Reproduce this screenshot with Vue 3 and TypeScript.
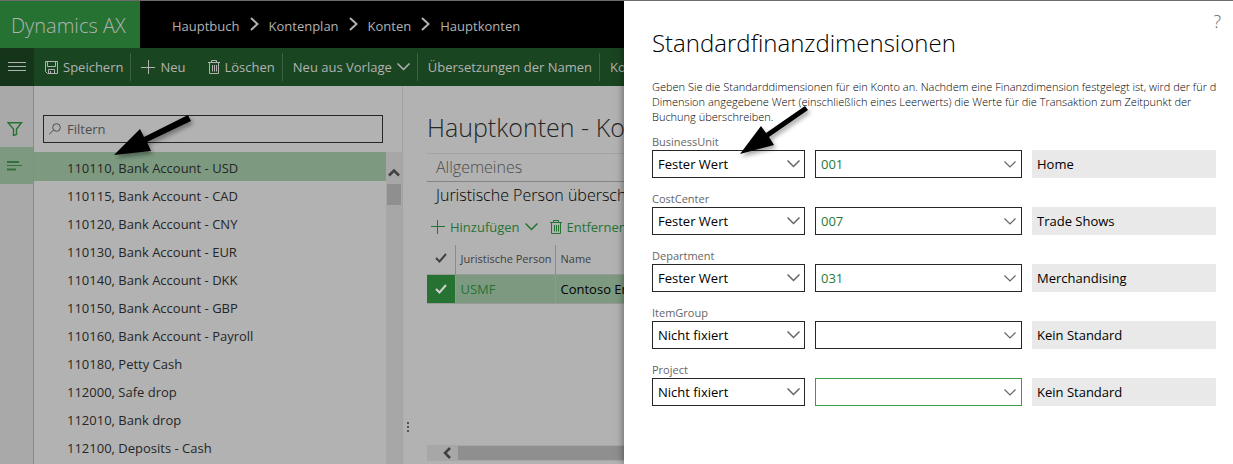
<script setup lang="ts">
import { ref } from 'vue'

interface Dimension {
  name: string
  mode: string
  value: string
  description: string
  active?: boolean
}

const crumbs = ['Hauptbuch', 'Kontenplan', 'Konten', 'Hauptkonten']

const accounts = [
  '110110, Bank Account - USD',
  '110115, Bank Account - CAD',
  '110120, Bank Account - CNY',
  '110130, Bank Account - EUR',
  '110140, Bank Account - DKK',
  '110150, Bank Account - GBP',
  '110160, Bank Account - Payroll',
  '110180, Petty Cash',
  '112000, Safe drop',
  '112010, Bank drop',
  '112100, Deposits - Cash',
]
const selected = ref(0)
const filter = ref('')

const dimensions = ref<Dimension[]>([
  { name: 'BusinessUnit', mode: 'Fester Wert', value: '001', description: 'Home' },
  { name: 'CostCenter', mode: 'Fester Wert', value: '007', description: 'Trade Shows' },
  { name: 'Department', mode: 'Fester Wert', value: '031', description: 'Merchandising' },
  { name: 'ItemGroup', mode: 'Nicht fixiert', value: '', description: 'Kein Standard' },
  { name: 'Project', mode: 'Nicht fixiert', value: '', description: 'Kein Standard', active: true },
])
</script>

<template>
  <div class="app">
    <header class="topbar">
      <div class="brand">Dynamics AX</div>
      <nav class="crumbs">
        <template v-for="(crumb, i) in crumbs" :key="crumb">
          <svg v-if="i > 0" class="crumb-sep" width="9" height="14" viewBox="0 0 9 14">
            <path d="M1 1l6.500 6L1 13" fill="none" stroke="currentColor" stroke-width="2" />
          </svg>
          <a href="#">{{ crumb }}</a>
        </template>
      </nav>
    </header>

    <div class="toolbar">
      <button class="menu" aria-label="Menü">
        <svg width="18" height="12" viewBox="0 0 18 12">
          <path d="M0 2.500h18M0 6.500h18M0 10.500h18" stroke="currentColor" />
        </svg>
      </button>
      <div class="group">
        <button>
          <svg width="13" height="13" viewBox="0 0 13 13" fill="none" stroke="currentColor">
            <path d="M.5.5h12v12H2.500l-2-2zM2.500.5v5h8v-5M3.500 12.500v-4h6v4M5.500 10v2.500" />
          </svg>
          Speichern
        </button>
      </div>
      <div class="group">
        <button>
          <svg width="14" height="14" viewBox="0 0 14 14" stroke="currentColor">
            <path d="M7.500 0v14M0 7.500h14" />
          </svg>
          Neu
        </button>
        <button>
          <svg width="12" height="14" viewBox="0 0 12 14" fill="none" stroke="currentColor">
            <path d="M0 2.500h12M3.500 2V.5h5V2M1.500 3v10.500h9V3M4.500 5v6.500M6.500 5v6.500M8.500 5v6.500" />
          </svg>
          Löschen
        </button>
      </div>
      <div class="group">
        <button>
          Neu aus Vorlage
          <svg width="13" height="8" viewBox="0 0 13 8">
            <path d="M.5.5l6 6 6-6" fill="none" stroke="currentColor" stroke-width="1.500" />
          </svg>
        </button>
      </div>
      <div class="group"><button>Übersetzungen der Namen</button></div>
      <div class="group"><button>Konten</button></div>
    </div>

    <div class="body">
      <aside class="rail">
        <button class="rail-filter" aria-label="Filter">
          <svg width="16" height="14" viewBox="0 0 16 14">
            <path d="M1 .7h13.500L9.500 7v5.500l-3 1V7z" fill="none" stroke="currentColor" stroke-width="1.400" />
          </svg>
        </button>
        <button class="rail-list" aria-label="Liste">
          <svg width="16" height="10" viewBox="0 0 16 10">
            <path d="M0 1h12M0 8.500h9" stroke="currentColor" stroke-width="2" />
            <path d="M0 4.500h15" stroke="currentColor" />
          </svg>
        </button>
      </aside>

      <section class="accounts">
        <label class="filter">
          <svg width="12" height="12" viewBox="0 0 12 12">
            <path d="M0 11.500l4.200-4.200" stroke="currentColor" fill="none" />
            <circle cx="7.500" cy="4.500" r="3.800" stroke="currentColor" fill="none" />
          </svg>
          <input v-model="filter" type="text" placeholder="Filtern" aria-label="Filtern" />
        </label>
        <div class="list-area">
          <ul class="list">
            <li v-for="(account, i) in accounts" :key="account">
              <button :class="{ on: i === selected }" @click="selected = i">{{ account }}</button>
            </li>
          </ul>
          <div class="vscroll">
            <svg width="12" height="9" viewBox="0 0 12 9">
              <path d="M1 7.500l5-5 5 5" fill="none" stroke="currentColor" stroke-width="2.500" />
            </svg>
            <div class="vthumb"></div>
          </div>
        </div>
      </section>

      <div class="splitter"><i></i><i></i><i></i></div>

      <main class="detail">
        <h1>Hauptkonten - Kontenplan</h1>
        <h2>Allgemeines</h2>
        <h3>Juristische Person überschreiben</h3>
        <div class="actions">
          <button>
            <svg width="14" height="14" viewBox="0 0 14 14" stroke="currentColor">
              <path d="M6.500 0v14M0 6.500h14" />
            </svg>
            Hinzufügen
            <svg width="13" height="8" viewBox="0 0 13 8">
              <path d="M.5.5l6 6 6-6" fill="none" stroke="currentColor" stroke-width="1.500" />
            </svg>
          </button>
          <button>
            <svg width="12" height="14" viewBox="0 0 12 14" fill="none" stroke="currentColor">
              <path d="M0 2.500h12M3.500 2V.5h5V2M1.500 3v10.500h9V3M4.500 5v6.500M6.500 5v6.500M8.500 5v6.500" />
            </svg>
            Entfernen
          </button>
        </div>
        <table class="grid">
          <thead>
            <tr>
              <th class="mark">
                <svg width="12" height="10" viewBox="0 0 12 10">
                  <path d="M1 5l3.500 3.500L11 1" fill="none" stroke="currentColor" stroke-width="2" />
                </svg>
              </th>
              <th class="entity">Juristische Person</th>
              <th>Name</th>
            </tr>
          </thead>
          <tbody>
            <tr>
              <td class="mark">
                <svg width="12" height="10" viewBox="0 0 12 10">
                  <path d="M1 5l3.500 3.500L11 1" fill="none" stroke="currentColor" stroke-width="2" />
                </svg>
              </td>
              <td class="entity"><a href="#">USMF</a></td>
              <td>Contoso Entertainment</td>
            </tr>
          </tbody>
        </table>
        <div class="hscroll">
          <svg width="9" height="12" viewBox="0 0 9 12">
            <path d="M8 1L3 6l5 5" fill="none" stroke="currentColor" stroke-width="2.500" />
          </svg>
          <div class="hthumb"></div>
        </div>
      </main>
    </div>

    <section class="dialog" role="dialog" aria-labelledby="dialog-title">
      <button class="help" aria-label="Hilfe">?</button>
      <h2 id="dialog-title">Standardfinanzdimensionen</h2>
      <p class="intro">
        Geben Sie die Standarddimensionen für ein Konto an. Nachdem eine Finanzdimension festgelegt ist, wird der für die<br />
        Dimension angegebene Wert (einschließlich eines Leerwerts) die Werte für die Transaktion zum Zeitpunkt der<br />
        Buchung überschreiben.
      </p>
      <div v-for="dim in dimensions" :key="dim.name" class="dimension">
        <label :for="`mode-${dim.name}`">{{ dim.name }}</label>
        <div class="fields">
          <div class="select">
            <select :id="`mode-${dim.name}`" v-model="dim.mode">
              <option>Fester Wert</option>
              <option>Nicht fixiert</option>
            </select>
            <svg width="13" height="8" viewBox="0 0 13 8">
              <path d="M.5.5l6 6 6-6" fill="none" stroke="currentColor" stroke-width="1.500" />
            </svg>
          </div>
          <div class="lookup" :class="{ active: dim.active }">
            <input v-model="dim.value" type="text" :aria-label="`${dim.name} Wert`" />
            <button :aria-label="`${dim.name} suchen`">
              <svg width="12" height="7" viewBox="0 0 12 7">
                <path d="M.5.5L6 6 11.500.5" fill="none" stroke="currentColor" stroke-width="1.200" />
              </svg>
            </button>
          </div>
          <output class="description">{{ dim.description }}</output>
        </div>
      </div>
    </section>

    <svg class="pointer pointer-account" width="80" height="46" viewBox="0 0 80 46">
      <path d="M2 42L28 16l4 8L76 2l3 6-44 21 4 9z" />
    </svg>
    <svg class="pointer pointer-mode" width="72" height="52" viewBox="0 0 72 52">
      <path d="M1 50l21-28 5 7L66 2l3 4-39 27 5 8z" />
    </svg>
  </div>
</template>

<style>
body {
  margin: 0;
}
</style>

<style scoped>
* {
  box-sizing: border-box;
}

.app {
  position: relative;
  display: flex;
  flex-direction: column;
  height: 100vh;
  overflow: hidden;
  border-top: 1px solid #6d6b6d;
  background: #b2b2b2;
  color: #262626;
  font: 13px/20px "Segoe UI", "Open Sans", "Noto Sans", sans-serif;
  white-space: nowrap;
}

button,
input,
select {
  margin: 0;
  padding: 0;
  border: 0;
  border-radius: 0;
  outline: 0;
  background: none;
  color: inherit;
  font: inherit;
}

a {
  color: inherit;
  text-decoration: none;
}

svg {
  flex: none;
}

.topbar {
  display: flex;
  flex: none;
  height: 47px;
  background: #000;
  color: #b2b2b2;
}

.brand {
  width: 140px;
  padding-left: 11px;
  background: #267233;
  font-size: 20px;
  line-height: 50px;
  font-weight: 300;
}

.crumbs {
  display: flex;
  align-items: center;
  gap: 10px;
  padding: 2px 0 0 32px;
}

.crumb-sep {
  margin-bottom: 4px;
}

.toolbar {
  display: flex;
  flex: none;
  height: 38px;
  background: #1a4521;
  color: #b2b2b2;
}

.menu {
  width: 34px;
  background: #143519;
}

.group {
  display: flex;
  align-items: center;
  gap: 22px;
  padding: 0 7px 0 11px;
  position: relative;
}

.group + .group::before {
  content: "";
  position: absolute;
  left: 0;
  top: 5px;
  bottom: 5px;
  width: 1px;
  background: #3d6243;
}

.group button,
.actions button {
  display: flex;
  align-items: center;
  gap: 5px;
}

.body {
  display: flex;
  flex: 1;
  min-height: 0;
}

.rail {
  display: flex;
  flex-direction: column;
  flex: none;
  width: 34px;
  padding-top: 24px;
  border-right: 1px solid #8a8a8a;
  background: #a9a9a9;
}

.rail button {
  display: flex;
  align-items: center;
  height: 37px;
  padding-left: 7px;
}

.rail-filter {
  color: #267233;
}

.rail .rail-list {
  background: #7d9a80;
  color: #356e3f;
}

.accounts {
  display: flex;
  flex-direction: column;
  flex: none;
  width: 369px;
  padding-top: 29px;
  border-right: 1px solid #a3a3a3;
}

.filter {
  display: flex;
  align-items: center;
  flex: none;
  gap: 6px;
  height: 28px;
  margin: 0 19px 9px 9px;
  padding-left: 5px;
  border: 1px solid #262626;
  color: #4d4d4d;
}

.filter input {
  flex: 1;
}

.filter input::placeholder {
  color: #4d4d4d;
  opacity: 1;
}

.list-area {
  display: flex;
  flex: 1;
  min-height: 0;
}

.list {
  flex: 1;
  margin: 0;
  padding: 0;
  overflow: hidden;
  list-style: none;
}

.list button {
  display: block;
  width: 100%;
  height: 28px;
  padding-left: 33px;
  text-align: left;
}

.list .on {
  height: 29px;
  margin-bottom: 1px;
  padding-top: 3px;
  background: #7d9a80;
}

.vscroll {
  display: flex;
  flex-direction: column;
  align-items: center;
  width: 16px;
  padding-top: 16px;
  background: #a7a7a7;
  color: #404040;
}

.vthumb {
  width: 14px;
  height: 21px;
  margin-top: 7px;
  background: #8f8f8f;
}

.splitter {
  display: flex;
  flex-direction: column;
  justify-content: flex-end;
  flex: none;
  gap: 2px;
  width: 24px;
  padding: 0 0 32px 4px;
}

.splitter i {
  width: 2px;
  height: 2px;
  background: #555;
}

.detail {
  display: flex;
  flex-direction: column;
  flex: 1;
  min-width: 0;
  padding: 20px 24px 3px 0;
}

.detail h1 {
  margin: 0;
  padding-bottom: 5px;
  border-bottom: 1px solid #a3a3a3;
  font-size: 25px;
  line-height: 42px;
  font-weight: 300;
}

.detail h2,
.detail h3 {
  margin: 0;
  padding-left: 9px;
  font-size: 16px;
  line-height: 27px;
  font-weight: 300;
}

.detail h2 {
  border-bottom: 1px solid #848484;
  color: #4d4d4d;
}

.detail h3 {
  color: #000;
}

.actions {
  display: flex;
  gap: 12px;
  padding: 8px 0 8px 4px;
  color: #267233;
}

.grid {
  width: 100%;
  border-collapse: collapse;
  table-layout: fixed;
  text-align: left;
}

.grid th {
  height: 29px;
  padding: 0 5px;
  border-left: 1px solid #8a8a8a;
  font-size: 11px;
  font-weight: 400;
  color: #404040;
}

.grid td {
  height: 29px;
  padding: 0 5px;
  border-top: 1px solid #999;
  border-bottom: 1px solid #999;
  border-left: 1px solid #8c9c8e;
  background: #7d9a80;
  color: #000;
}

.grid .mark {
  width: 28px;
  padding: 0;
  border-left: 0;
  text-align: center;
}

.grid td.mark {
  background: #267233;
  color: #d0d0d0;
}

.grid .entity {
  width: 100px;
}

.grid td a {
  color: #267233;
}

.hscroll {
  display: flex;
  align-items: center;
  height: 16px;
  margin-top: auto;
  padding-left: 15px;
  gap: 7px;
  background: #a7a7a7;
  color: #404040;
}

.hthumb {
  flex: 1;
  height: 14px;
  background: #8f8f8f;
}

.dialog {
  position: absolute;
  top: 0;
  right: 0;
  bottom: 0;
  width: 609px;
  padding: 24px 17px 0 28px;
  background: #fff;
  box-shadow: 0 0 8px rgba(0, 0, 0, 0.5);
  color: #000;
}

.dialog h2 {
  margin: 0 0 18px;
  font-size: 24px;
  line-height: 36px;
  font-weight: 300;
}

.help {
  position: absolute;
  top: 10px;
  right: 12px;
  color: #666;
  font-size: 18px;
  font-weight: 300;
}

.intro {
  margin: 0 0 10px;
  overflow: hidden;
  color: #000;
  font-size: 11px;
  font-weight: 300;
  line-height: 15px;
}

.dimension {
  padding-bottom: 13px;
}

.dimension label {
  display: block;
  color: #666;
  font-size: 11px;
  line-height: 16px;
}

.fields {
  display: grid;
  grid-template-columns: 153px 207px 1fr;
  gap: 10px;
}

.select,
.lookup {
  display: flex;
  align-items: center;
  height: 28px;
  border: 1px solid #262626;
  color: #666;
}

.select {
  position: relative;
}

.select select {
  width: 100%;
  height: 100%;
  padding-left: 5px;
  appearance: none;
  color: #000;
}

.select svg {
  position: absolute;
  right: 4px;
  pointer-events: none;
}

.lookup input {
  flex: 1;
  min-width: 0;
  padding-left: 5px;
  color: #267a35;
}

.lookup button {
  display: flex;
  padding: 8px 5px;
}

.lookup.active {
  border-color: #369c48;
}

.description {
  padding-left: 5px;
  background: #e9e9e9;
  line-height: 28px;
}

.pointer {
  position: absolute;
  overflow: visible;
  pointer-events: none;
  filter: drop-shadow(2px 3px 2px rgba(0, 0, 0, 0.35));
}

.pointer-account {
  left: 112px;
  top: 112px;
}

.pointer-mode {
  left: 739px;
  top: 103px;
}
</style>
